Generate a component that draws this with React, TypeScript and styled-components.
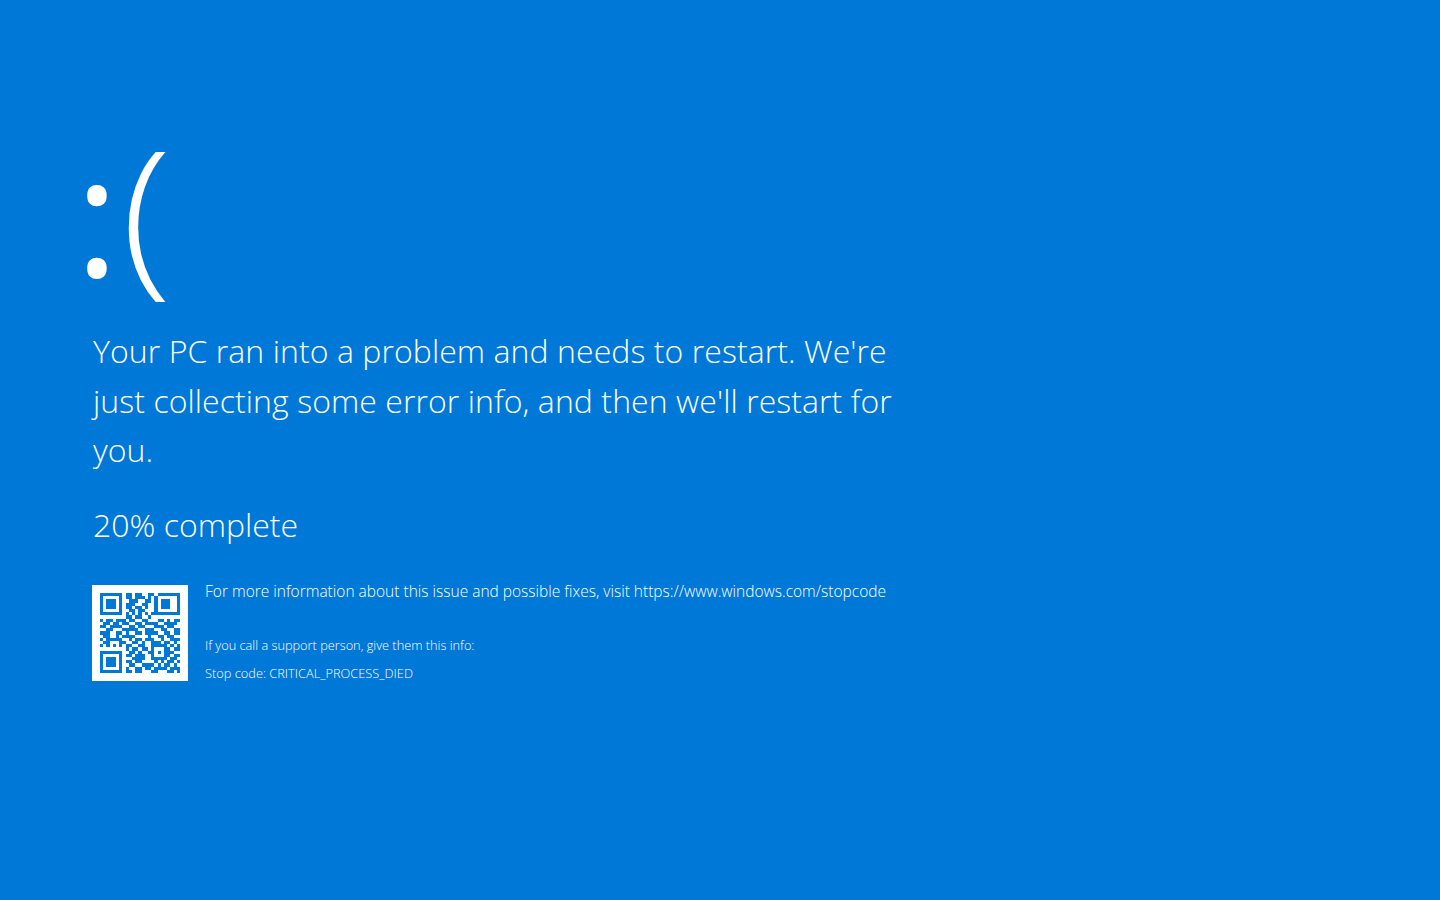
import React from 'react';
import styled, { createGlobalStyle } from 'styled-components';

const QR_ROWS = [
  '1111111011011001101111111',
  '1000001011011101010000001',
  '1011101001110011010111001',
  '1011101011100110010111001',
  '1011101011011010010111001',
  '1000001001101100010000001',
  '1111111010101010111111111',
  '0000000011011001000000000',
  '1011011101100110001101011',
  '0110110110011011110011110',
  '1101111001101100011101100',
  '0011000111110011100110011',
  '1110011010011011110011011',
  '0110010111100001001101100',
  '1011111001011011100100111',
  '0110001100110100111011010',
  '1010101011001100111110101',
  '0000000010110110100011011',
  '1111111001101001101011100',
  '1000001011011100100011011',
  '1011101000111100111110110',
  '1011101011011000010101101',
  '1011101001100111101011010',
  '1000001010011011011110111',
  '1111111011011000110001101',
];

const GlobalStyle = createGlobalStyle`
  html, body {
    margin: 0;
    padding: 0;
    background: #0078d7;
  }
`;

function QrCode() {
  return (
    <QrBox>
      <QrSvg viewBox="0 0 25 25" shapeRendering="crispEdges">
        {QR_ROWS.map((row, y) =>
          row.split('').map((cell, x) =>
            cell === '1' ? <rect key={`${x}-${y}`} x={x} y={y} width="1" height="1" fill="#0078d7" /> : null,
          ),
        )}
      </QrSvg>
    </QrBox>
  );
}

export default function App() {
  return (
    <Screen>
      <GlobalStyle />
      <Face>
        <Colon>:</Colon>
        <Paren>(</Paren>
      </Face>
      <Message>
        Your PC ran into a problem and needs to restart. We're
        <br />
        just collecting some error info, and then we'll restart for
        <br />
        you.
      </Message>
      <Progress>20% complete</Progress>
      <Details>
        <QrCode />
        <DetailText>
          <MoreInfo>For more information about this issue and possible fixes, visit https://www.windows.com/stopcode</MoreInfo>
          <SupportLine>If you call a support person, give them this info:</SupportLine>
          <StopCode>Stop code: CRITICAL_PROCESS_DIED</StopCode>
        </DetailText>
      </Details>
    </Screen>
  );
}

const Screen = styled.div`
  box-sizing: border-box;
  height: 900px;
  overflow: hidden;
  padding: 108px 0 0 92px;
  background: #0078d7;
  color: #fff;
  font-family: 'Open Sans', 'Liberation Sans', sans-serif;
  font-weight: 300;
`;

const Face = styled.div`
  display: flex;
  align-items: baseline;
  height: 218px;
  margin-left: -17px;
  line-height: 206px;
`;

const Colon = styled.span`
  font-size: 167px;
  font-weight: 400;
`;

const Paren = styled.span`
  display: inline-block;
  margin-left: 4px;
  font-size: 171px;
  transform: translateY(-2px) scaleX(1.08);
`;

const Message = styled.p`
  margin: 0 0 0 1px;
  font-size: 32px;
  line-height: 49.5px;
  letter-spacing: 0.07px;
`;

const Progress = styled.p`
  margin: 25px 0 0 1px;
  font-size: 32px;
  line-height: 49.5px;
`;

const Details = styled.div`
  display: flex;
  gap: 17px;
  margin-top: 36px;
`;

const QrBox = styled.div`
  display: flex;
  align-items: center;
  justify-content: center;
  width: 96px;
  height: 96px;
  background: #fff;
`;

const QrSvg = styled.svg`
  width: 80px;
  height: 80px;
  filter: blur(0.4px);
`;

const DetailText = styled.div`
  display: flex;
  flex-direction: column;
`;

const MoreInfo = styled.div`
  margin: -5px 0 34px;
  font-size: 15.5px;
  line-height: 22px;
  white-space: nowrap;
`;

const SupportLine = styled.div`
  margin-bottom: 10px;
  font-size: 12.75px;
  line-height: 18px;
`;

const StopCode = styled.div`
  font-size: 12.8px;
  line-height: 18px;
`;
